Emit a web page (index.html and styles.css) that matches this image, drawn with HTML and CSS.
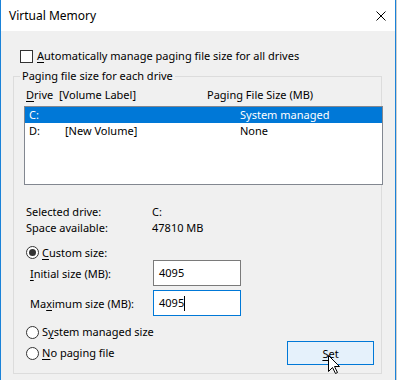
FILE: index.html
```html
<!DOCTYPE html>
<html>
  <head>
    <title>Virtual Memory</title>
    <meta charset="utf-8" />
    <link rel="stylesheet" href="styles.css">
  </head>
  <body>
    <div class="window">
      <div class="titlebar">
        <span class="title">Virtual Memory</span>
        <svg class="close" width="10" height="10" viewBox="0 0 10 10">
          <path d="M0.5 0.5 L9.5 9.5 M9.5 0.5 L0.5 9.5" stroke="#000" stroke-width="1" fill="none"/>
        </svg>
      </div>
      <div class="content">
        <div class="check-row">
          <span class="checkbox"></span>
          <span class="label"><u>A</u>utomatically manage paging file size for all drives</span>
        </div>
        <fieldset class="group">
          <legend>Paging file size for each drive</legend>
          <div class="list-head">
            <span class="c-drive"><u>D</u>rive</span>
            <span class="c-label">[Volume Label]</span>
            <span class="c-size">Paging File Size (MB)</span>
          </div>
          <div class="listbox">
            <div class="row selected">
              <span class="c1">C:</span><span class="c2"></span><span class="c3">System managed</span>
            </div>
            <div class="row">
              <span class="c1">D:</span><span class="c2">[New Volume]</span><span class="c3">None</span>
            </div>
          </div>
          <div class="info">
            <div class="info-row"><span class="key">Selected drive:</span><span>C:</span></div>
            <div class="info-row"><span class="key">Space available:</span><span>47810 MB</span></div>
          </div>
          <div class="radio-row custom">
            <span class="radio on"></span><span><u>C</u>ustom size:</span>
          </div>
          <div class="field-row">
            <span class="field-label"><u>I</u>nitial size (MB):</span>
            <span class="input">4095</span>
          </div>
          <div class="field-row second">
            <span class="field-label">Ma<u>x</u>imum size (MB):</span>
            <span class="input focused">4095<span class="caret"></span></span>
          </div>
          <div class="radio-row sysman">
            <span class="radio"></span><span>S<u>y</u>stem managed size</span>
          </div>
          <div class="last-row">
            <div class="radio-row">
              <span class="radio"></span><span><u>N</u>o paging file</span>
            </div>
            <span class="button"><u>S</u>et</span>
          </div>
        </fieldset>
      </div>
      <svg class="cursor" width="13" height="20" viewBox="0 0 13 20">
        <path d="M0.5 0.5 L0.5 16.5 L4.5 12.5 L7.5 18.5 L9.5 17.5 L6.5 11.5 L11.5 11.5 Z" fill="#fff" stroke="#000" stroke-width="1"/>
      </svg>
    </div>
  </body>
</html>
```

FILE: styles.css
```css
body {
    margin: 0;
    background: #cfcfcf;
    font-family: "Noto Sans", "Open Sans", sans-serif;
    font-size: 11px;
    color: #000; }

u {
    text-decoration: underline;
    text-underline-offset: 2px; }

div.window {
    position: relative;
    width: 394px;
    height: 380px;
    overflow: hidden;
    border-left: 1px solid #1a82d8;
    border-right: 1px solid #1a82d8;
    background: #f0f0f0; }

div.titlebar {
    height: 31px;
    background: #fff;
    display: flex;
    align-items: center;
    justify-content: space-between;
    padding-left: 8px;
    font-size: 12px; }
div.titlebar svg.close {
    margin-right: 9px; }

div.content {
    padding-top: 17px; }

div.check-row {
    display: flex;
    align-items: center;
    height: 16px;
    line-height: 16px;
    margin-left: 19px; }
span.checkbox {
    width: 11px;
    height: 11px;
    border: 1px solid #333;
    background: #fff;
    margin-right: 4px; }

fieldset.group {
    margin: 4px 0 0 12px;
    padding: 0;
    width: 367px;
    min-width: 0;
    border: 1px solid #dcdcdc; }
fieldset.group legend {
    margin-left: 6px;
    padding: 0 2px;
    line-height: 16px; }

div.list-head {
    display: flex;
    line-height: 16px;
    margin-top: 3px;
    padding-left: 12px; }
div.list-head .c-drive {
    width: 33px; }
div.list-head .c-label {
    width: 148px; }

div.listbox {
    margin: 3px 0 0 10px;
    width: 357px;
    height: 77px;
    border: 1px solid #828790;
    background: #fff; }
div.listbox div.row {
    display: flex;
    height: 16px;
    line-height: 16px;
    padding-left: 4px; }
div.listbox div.row.selected {
    background: #0078d7;
    color: #fff; }
div.row span.c1 {
    width: 36px; }
div.row span.c2 {
    width: 175px; }

div.info {
    margin-top: 19px;
    padding-left: 12px;
    line-height: 16px; }
div.info-row {
    display: flex; }
div.info-row span.key {
    width: 126px; }

div.radio-row {
    display: flex;
    align-items: center;
    line-height: 16px;
    padding-left: 12px; }
div.radio-row.custom {
    margin-top: 9px;
    line-height: 15px; }
div.radio-row.sysman {
    margin-top: 8px; }
span.radio {
    box-sizing: border-box;
    width: 13px;
    height: 13px;
    border: 1px solid #333;
    border-radius: 50%;
    background: #fff;
    margin-right: 3px;
    display: flex;
    align-items: center;
    justify-content: center; }
span.radio.on:after {
    content: '';
    width: 7px;
    height: 7px;
    border-radius: 50%;
    background: #333; }

div.field-row {
    display: flex;
    align-items: center;
    padding-left: 16px; }
div.field-row.second {
    margin-top: 4px; }
span.field-label {
    width: 123px; }
span.input {
    box-sizing: border-box;
    width: 88px;
    height: 26px;
    border: 1px solid #7a7a7a;
    background: #fff;
    padding-left: 5px;
    line-height: 22px;
    display: flex;
    align-items: center; }
span.input.focused {
    border-color: #0078d7; }
span.caret {
    width: 1px;
    height: 15px;
    background: #000; }

div.last-row {
    display: flex;
    align-items: center;
    justify-content: space-between;
    margin-top: 1px;
    padding-right: 7px;
    padding-bottom: 8px; }
span.button {
    box-sizing: border-box;
    width: 87px;
    height: 24px;
    border: 1px solid #0078d7;
    background: #e5f1fb;
    display: flex;
    align-items: center;
    justify-content: center; }

svg.cursor {
    position: absolute;
    left: 327px;
    top: 355px; }
```
